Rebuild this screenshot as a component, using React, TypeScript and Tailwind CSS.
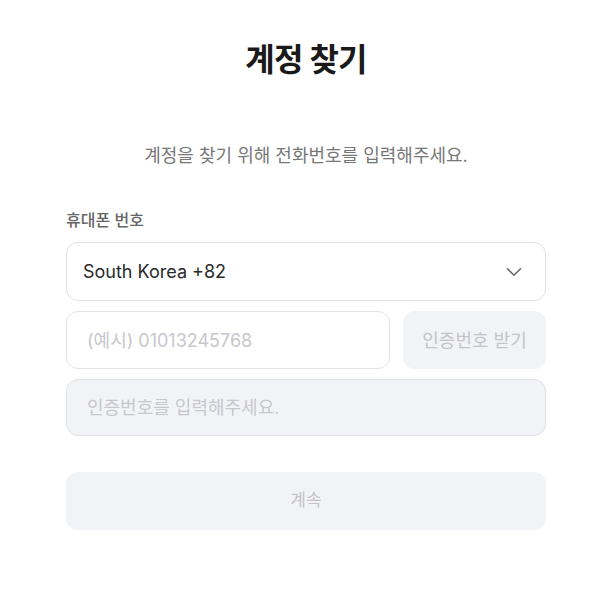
import { ChevronDown } from 'lucide-react';

export default function App() {
  return (
    <div
      className="min-h-[599px] w-full bg-white pl-3"
      style={{ fontFamily: '"Inter", "Noto Sans CJK KR", sans-serif' }}
    >
      <div className="mx-auto flex w-[480px] flex-col pt-[37px]">
        <h1 className="text-center text-[32px] font-bold leading-[46px] tracking-tight text-[#1a1a1a]">
          계정 찾기
        </h1>

        <p className="mt-[61px] text-center text-[18px] leading-6 text-[#777777]">
          계정을 찾기 위해 전화번호를 입력해주세요.
        </p>

        <label className="mt-[42px] text-[16px] font-medium leading-5 text-[#666666]">휴대폰 번호</label>

        <button className="mt-[12px] flex h-[59px] items-center justify-between rounded-xl border border-[#e2e2e6] bg-white pl-4 pr-[18px] text-left">
          <span className="text-[18px] text-[#2a2a2a]">South Korea +82</span>
          <ChevronDown className="h-[26px] w-[26px] text-[#6b6b6b]" strokeWidth={1.5} />
        </button>

        <div className="mt-[10px] flex gap-[13px]">
          <div className="flex h-[58px] flex-1 items-center rounded-xl border border-[#e2e2e6] bg-white px-5">
            <span className="text-[18px] text-[#c7c7cc]">(예시) 01013245768</span>
          </div>
          <button className="flex h-[58px] w-[143px] items-center justify-center rounded-xl bg-[#f2f3f7] text-[18px] text-[#c4c4c8]">
            인증번호 받기
          </button>
        </div>

        <div className="mt-[10px] flex h-[57px] items-center rounded-xl border border-[#e2e2e6] bg-[#f2f3f7] px-5">
          <span className="text-[18px] text-[#c7c7cc]">인증번호를 입력해주세요.</span>
        </div>

        <button className="mt-[36px] flex h-[58px] items-center justify-center rounded-xl bg-[#f2f3f7] text-[17px] text-[#c4c4c8]">
          계속
        </button>
      </div>
    </div>
  );
}
